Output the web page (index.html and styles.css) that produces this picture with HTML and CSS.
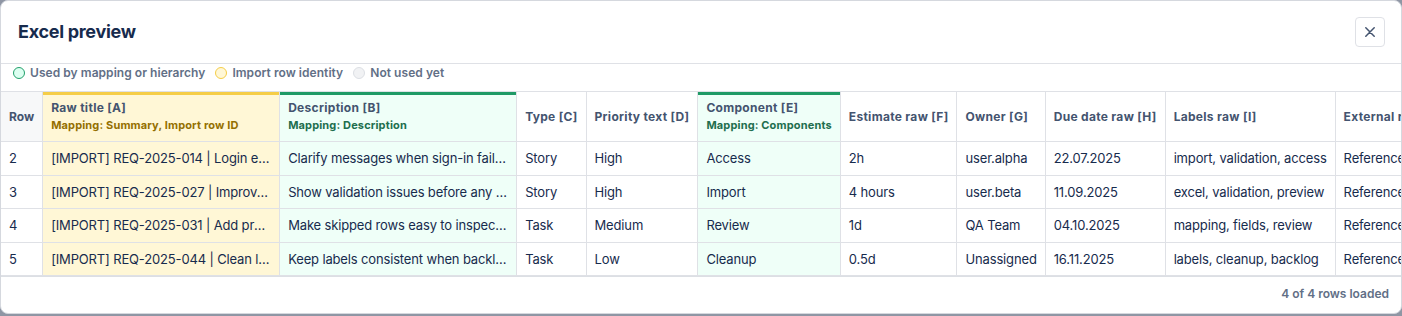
FILE: index.html
```html
<!DOCTYPE html>
<html lang="en">
<head>
<meta charset="utf-8">
<title>Excel preview</title>
<link rel="stylesheet" href="styles.css">
</head>
<body>
<div class="modal">
  <header class="modal-header">
    <h2 class="modal-title">Excel preview</h2>
    <button class="close-btn" type="button" aria-label="Close">
      <svg width="10" height="10" viewBox="0 0 10 10" aria-hidden="true"><path d="M0.8 0.8 L9.2 9.2 M9.2 0.8 L0.8 9.2" stroke="#44546f" stroke-width="1.5" stroke-linecap="round" fill="none"/></svg>
    </button>
  </header>
  <div class="legend">
    <span class="legend-item"><span class="dot dot-used"></span>Used by mapping or hierarchy</span>
    <span class="legend-item"><span class="dot dot-identity"></span>Import row identity</span>
    <span class="legend-item"><span class="dot dot-unused"></span>Not used yet</span>
  </div>
  <div class="table-wrap">
    <table class="preview">
      <thead>
        <tr>
          <th class="th-rownum">Row</th>
          <th class="col-identity"><div class="th-name">Raw title [A]</div><div class="th-map map-identity">Mapping: Summary, Import row ID</div></th>
          <th class="col-used"><div class="th-name">Description [B]</div><div class="th-map map-used">Mapping: Description</div></th>
          <th><div class="th-name">Type [C]</div></th>
          <th><div class="th-name">Priority text [D]</div></th>
          <th class="col-used"><div class="th-name">Component [E]</div><div class="th-map map-used">Mapping: Components</div></th>
          <th><div class="th-name">Estimate raw [F]</div></th>
          <th><div class="th-name">Owner [G]</div></th>
          <th><div class="th-name">Due date raw [H]</div></th>
          <th><div class="th-name">Labels raw [I]</div></th>
          <th><div class="th-name">External reference [J]</div></th>
        </tr>
      </thead>
      <tbody>
        <tr>
          <td>2</td>
          <td class="col-identity"><div class="clip">[IMPORT] REQ-2025-014 | Login error messages</div></td>
          <td class="col-used"><div class="clip">Clarify messages when sign-in fails for locked accounts</div></td>
          <td>Story</td>
          <td>High</td>
          <td class="col-used">Access</td>
          <td>2h</td>
          <td>user.alpha</td>
          <td>22.07.2025</td>
          <td>import, validation, access</td>
          <td>Reference REQ-2025-014</td>
        </tr>
        <tr>
          <td>3</td>
          <td class="col-identity"><div class="clip">[IMPORT] REQ-2025-027 | Improve import validation</div></td>
          <td class="col-used"><div class="clip">Show validation issues before any rows are imported</div></td>
          <td>Story</td>
          <td>High</td>
          <td class="col-used">Import</td>
          <td>4 hours</td>
          <td>user.beta</td>
          <td>11.09.2025</td>
          <td>excel, validation, preview</td>
          <td>Reference REQ-2025-027</td>
        </tr>
        <tr>
          <td>4</td>
          <td class="col-identity"><div class="clip">[IMPORT] REQ-2025-031 | Add preview for skipped rows</div></td>
          <td class="col-used"><div class="clip">Make skipped rows easy to inspect before import</div></td>
          <td>Task</td>
          <td>Medium</td>
          <td class="col-used">Review</td>
          <td>1d</td>
          <td>QA Team</td>
          <td>04.10.2025</td>
          <td>mapping, fields, review</td>
          <td>Reference REQ-2025-031</td>
        </tr>
        <tr>
          <td>5</td>
          <td class="col-identity"><div class="clip">[IMPORT] REQ-2025-044 | Clean labels</div></td>
          <td class="col-used"><div class="clip">Keep labels consistent when backlog items are cleaned up</div></td>
          <td>Task</td>
          <td>Low</td>
          <td class="col-used">Cleanup</td>
          <td>0.5d</td>
          <td>Unassigned</td>
          <td>16.11.2025</td>
          <td>labels, cleanup, backlog</td>
          <td>Reference REQ-2025-044</td>
        </tr>
      </tbody>
    </table>
  </div>
  <footer class="modal-footer">4 of 4 rows loaded</footer>
</div>
</body>
</html>
```
FILE: styles.css
```css
* { box-sizing: border-box; }

html, body {
  margin: 0;
  padding: 0;
}

body {
  background: #8f96a4;
  font-family: Inter, "Liberation Sans", sans-serif;
  color: #172b4d;
  width: 1402px;
  height: 316px;
  overflow: hidden;
}

.modal {
  width: 1402px;
  background: #ffffff;
  border: 1px solid #d5d8de;
  border-radius: 8px;
  overflow: hidden;
  display: flex;
  flex-direction: column;
}

.modal-header {
  display: flex;
  align-items: center;
  justify-content: space-between;
  padding: 16px 16px 16px 17px;
  border-bottom: 1px solid #dfe1e6;
}

.modal-title {
  margin: 0;
  font-size: 18px;
  font-weight: 700;
  line-height: 24px;
  letter-spacing: -0.3px;
  color: #172b4d;
}

.close-btn {
  width: 30px;
  height: 30px;
  padding: 0;
  border: 1px solid #dfe1e6;
  border-radius: 4px;
  background: #ffffff;
  display: flex;
  align-items: center;
  justify-content: center;
}

.legend {
  display: flex;
  align-items: center;
  gap: 10px;
  padding: 1px 12px 10px;
  border-bottom: 1px solid #dfe1e6;
}

.legend-item {
  display: flex;
  align-items: center;
  gap: 5px;
  font-size: 12px;
  font-weight: 600;
  line-height: 16px;
  letter-spacing: 0.05px;
  color: #626f86;
}

.dot {
  width: 12px;
  height: 12px;
  border-radius: 50%;
  border: 1px solid;
  flex: none;
}

.dot-used { border-color: #22a06b; background: #dcfff1; }
.dot-identity { border-color: #f5cd47; background: #fff7d6; }
.dot-unused { border-color: #dcdfe4; background: #f1f2f4; }

.table-wrap {
  overflow: hidden;
  border-bottom: 1px solid #dcdfe4;
}

.preview {
  border-collapse: separate;
  border-spacing: 0;
  width: max-content;
}

.preview th,
.preview td {
  border-right: 1px solid #dfe1e6;
  border-bottom: 1px solid #dfe1e6;
  white-space: nowrap;
  text-align: left;
}

.preview th {
  padding: 8px 8px;
  vertical-align: middle;
  font-size: 12px;
  font-weight: 700;
  color: #44546f;
  background: #ffffff;
  letter-spacing: 0.3px;
}

.preview td {
  padding: 6px 8px;
  font-size: 13px;
  line-height: 20.6px;
  font-weight: 400;
  letter-spacing: -0.15px;
  color: #172b4d;
}

.clip {
  max-width: 220px;
  overflow: hidden;
  text-overflow: ellipsis;
}

.th-name {
  line-height: 16px;
}

.th-map {
  margin-top: 2px;
  font-size: 11px;
  line-height: 15px;
  font-weight: 700;
  letter-spacing: 0.15px;
}

.map-identity { color: #946f00; }
.map-used { color: #216e4e; }

.preview .th-rownum {
  background: #f7f8f9;
  letter-spacing: 0;
}

.preview .col-identity { background: #fff7d6; }
.preview .col-used { background: #effff8; }

.preview th.col-identity { box-shadow: inset 0 3px 0 #f5cd47; }
.preview th.col-used { box-shadow: inset 0 3px 0 #1f9a66; }

.modal-footer {
  display: flex;
  justify-content: flex-end;
  padding: 9px 12px 11px;
  font-size: 12px;
  font-weight: 600;
  line-height: 16px;
  color: #626f86;
}
```
